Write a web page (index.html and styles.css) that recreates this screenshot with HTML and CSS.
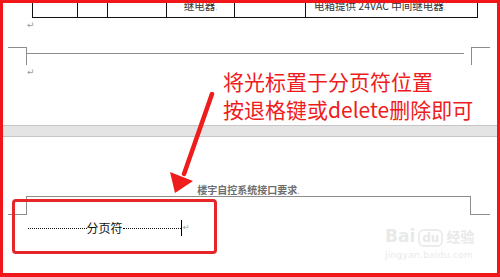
FILE: index.html
```html
<!DOCTYPE html>
<html lang="zh-CN">
<head>
  <meta charset="UTF-8">
  <title>分页符</title>
  <link rel="stylesheet" href="styles.css">
</head>
<body>
  <div class="frame">
    <!-- end of previous page -->
    <table class="grid">
      <tr>
        <td class="col1"></td>
        <td class="col2"></td>
        <td class="col3"></td>
        <td class="col4 center">继电器<span class="cell-end">.</span></td>
        <td class="col5"></td>
        <td class="col6">电箱提供 24VAC 中间继电器<span class="cell-end">.</span></td>
      </tr>
    </table>
    <div class="para">↵</div>
    <div class="footer-marks">
      <span class="corner corner-left"></span>
      <span class="rule"></span>
      <span class="corner corner-right"></span>
    </div>
    <div class="para">↵</div>

    <div class="page-gap"></div>

    <!-- next page -->
    <div class="header-text">楼宇自控系统接口要求<span class="cell-end">.</span></div>
    <div class="header-marks">
      <span class="stub"></span>
      <span class="header-box"></span>
      <span class="stub stub-right"></span>
    </div>
    <div class="page-break">
      <span class="break-line">
        <span class="dots"></span>
        <span class="break-label">分页符</span>
        <span class="dots"></span>
      </span>
      <span class="cursor"></span>
      <span class="mark">↵</span>
    </div>

    <!-- annotation -->
    <div class="note">
      <p>将光标置于分页符位置</p>
      <p>按退格键或delete删除即可</p>
    </div>
    <svg class="arrow" width="60" height="110" viewBox="0 0 60 110">
      <line x1="52" y1="2" x2="24" y2="82" stroke="#ee1c1c" stroke-width="4.5" stroke-linecap="round"/>
      <polygon points="10,80 33,89 15,101" fill="#ee1c1c"/>
    </svg>
    <div class="highlight"></div>

    <div class="watermark">
      <div class="wm-logo">Bai<span class="wm-du">du</span><span class="wm-cn">经验</span></div>
      <div class="wm-url">jingyan.baidu.com</div>
    </div>
  </div>
</body>
</html>
```

FILE: styles.css
```css
* {
  box-sizing: border-box;
  margin: 0;
  padding: 0;
}
body {
  background-color: #ffffff;
  font-family: 'Noto Sans CJK SC', 'DejaVu Sans', sans-serif;
}
.frame {
  position: relative;
  width: 500px;
  height: 277px;
  border: 3px solid #f0161a;
  border-bottom-width: 4px;
  background-color: #ffffff;
  overflow: hidden;
}

/* table at the end of page one */
.grid {
  margin-top: -6px;
  margin-left: 29px;
  border-collapse: collapse;
  table-layout: fixed;
  width: 445px;
}
.grid td {
  height: 20px;
  border: 1px solid #111;
  vertical-align: top;
  padding: 2px 0 0 8px;
  font-size: 10.5px;
  line-height: 12px;
  color: #333;
  white-space: nowrap;
}
.grid td.center {
  text-align: center;
  padding-left: 0;
}
.col1 { width: 45px; }
.col2 { width: 30px; }
.col3 { width: 59px; }
.col4 { width: 68px; }
.col5 { width: 71px; }
.col6 { width: 172px; }
.cell-end {
  font-size: 7px;
  color: #999;
}

.para {
  height: 14px;
  padding-left: 24px;
  font-family: 'DejaVu Sans', sans-serif;
  font-size: 9px;
  line-height: 14px;
  color: #999;
}
.grid + .para {
  margin-top: 0;
}

.footer-marks {
  display: flex;
  align-items: flex-start;
  height: 18px;
  margin-top: 15px;
  margin-left: 5px;
}
.corner {
  height: 18px;
  border-top: 1px solid #8c8c8c;
}
.corner-left {
  width: 19px;
  border-right: 1px solid #8c8c8c;
}
.corner-right {
  width: 19px;
  margin-left: 7px;
  border-left: 1px solid #8c8c8c;
}
.rule {
  width: 437px;
  margin-top: 6px;
  border-top: 1px solid #8c8c8c;
}

.page-gap {
  height: 12px;
  margin-top: 46px;
  background-color: #e4e4e4;
  border-top: 1px solid #c6c6c6;
  border-bottom: 1px solid #c6c6c6;
}

/* page two */
.header-text {
  margin-top: 47px;
  margin-left: 23px;
  width: 445px;
  text-align: center;
  font-size: 10px;
  font-weight: bold;
  line-height: 12px;
  color: #6e6e6e;
}
.header-marks {
  display: flex;
  align-items: flex-end;
  height: 18px;
  margin-left: 5px;
}
.stub {
  width: 18px;
  border-bottom: 1px solid #8c8c8c;
}
.header-box {
  width: 445px;
  height: 19px;
  border: 1px solid #8c8c8c;
  border-bottom: none;
}
.stub-right {
  width: 19px;
}

.page-break {
  display: flex;
  align-items: center;
  height: 15px;
  margin-top: 5px;
  padding-left: 25px;
}
.break-line {
  display: flex;
  align-items: center;
  width: 153px;
}
.dots {
  flex: 1;
  border-bottom: 1px dotted #111;
  margin-top: 2px;
}
.break-label {
  font-size: 12px;
  line-height: 15px;
  color: #111;
}
.cursor {
  width: 1px;
  height: 16px;
  background-color: #000;
}
.mark {
  margin-left: 1px;
  font-family: 'DejaVu Sans', sans-serif;
  font-size: 8px;
  color: #999;
}

/* red annotation */
.note {
  position: absolute;
  left: 220px;
  top: 64px;
  color: #ee1c1c;
  font-size: 21px;
  line-height: 28px;
  white-space: nowrap;
}
.arrow {
  position: absolute;
  left: 157px;
  top: 89px;
}
.highlight {
  position: absolute;
  left: 9px;
  top: 196px;
  width: 205px;
  height: 55px;
  border: 3px solid #e5262a;
  border-radius: 4px;
}

.watermark {
  position: absolute;
  left: 382px;
  top: 223px;
  color: #e9e9e9;
  font-family: 'DejaVu Sans', sans-serif;
}
.wm-logo {
  font-size: 17px;
  font-weight: bold;
  line-height: 20px;
}
.wm-du {
  display: inline-block;
  margin-left: 3px;
  padding: 0 2px;
  font-size: 12px;
  line-height: 14px;
  border: 2px solid #ececec;
  border-radius: 6px;
}
.wm-cn {
  margin-left: 3px;
  font-family: 'Noto Sans CJK SC', sans-serif;
  font-size: 14px;
}
.wm-url {
  margin-top: 3px;
  font-size: 9px;
  letter-spacing: 0.3px;
}
```
